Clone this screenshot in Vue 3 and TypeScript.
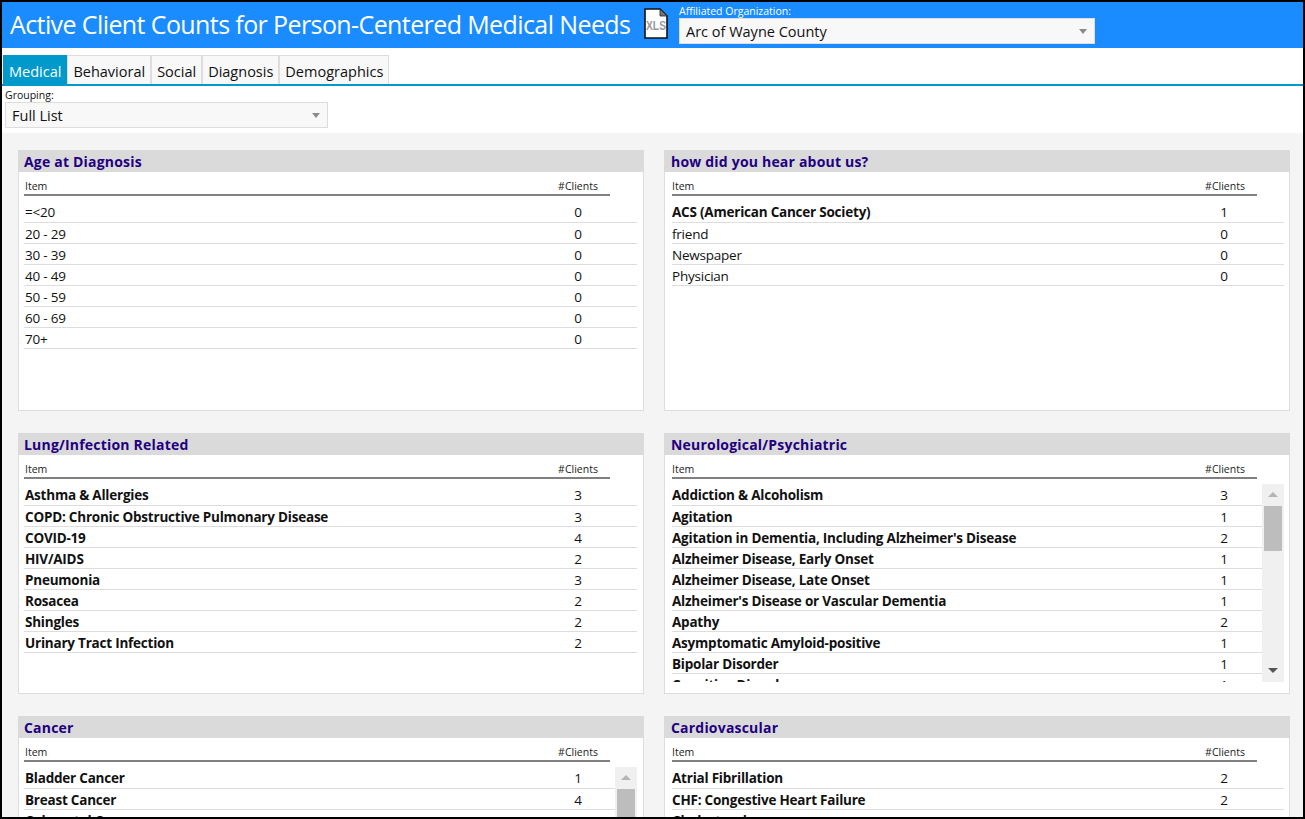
<script setup lang="ts">
interface Row { name: string; count: number }
interface Card { title: string; rows: Row[]; thumb?: number }

const tabs = ['Medical', 'Behavioral', 'Social', 'Diagnosis', 'Demographics']

const toRows = (list: [string, number][]): Row[] => list.map(([name, count]) => ({ name, count }))

const cards: Card[] = [
  { title: 'Age at Diagnosis', rows: toRows([['=<20', 0], ['20 - 29', 0], ['30 - 39', 0], ['40 - 49', 0], ['50 - 59', 0], ['60 - 69', 0], ['70+', 0]]) },
  { title: 'how did you hear about us?', rows: toRows([['ACS (American Cancer Society)', 1], ['friend', 0], ['Newspaper', 0], ['Physician', 0]]) },
  { title: 'Lung/Infection Related', rows: toRows([['Asthma & Allergies', 3], ['COPD: Chronic Obstructive Pulmonary Disease', 3], ['COVID-19', 4], ['HIV/AIDS', 2], ['Pneumonia', 3], ['Rosacea', 2], ['Shingles', 2], ['Urinary Tract Infection', 2]]) },
  { title: 'Neurological/Psychiatric', thumb: 45, rows: toRows([['Addiction & Alcoholism', 3], ['Agitation', 1], ["Agitation in Dementia, Including Alzheimer's Disease", 2], ['Alzheimer Disease, Early Onset', 1], ['Alzheimer Disease, Late Onset', 1], ["Alzheimer's Disease or Vascular Dementia", 1], ['Apathy', 2], ['Asymptomatic Amyloid-positive', 1], ['Bipolar Disorder', 1], ['Cognitive Disorder', 1]]) },
  { title: 'Cancer', thumb: 90, rows: toRows([['Bladder Cancer', 1], ['Breast Cancer', 4], ['Colorectal Cancer', 1]]) },
  { title: 'Cardiovascular', rows: toRows([['Atrial Fibrillation', 2], ['CHF: Congestive Heart Failure', 2], ['Cholesterol', 2]]) }
]
</script>

<template>
  <div class="app">
    <header class="top">
      <h1 class="title">Active Client Counts for Person-Centered Medical Needs</h1>
      <svg class="xls" width="24" height="31" viewBox="0 0 24 31" aria-label="Export to XLS">
        <path d="M1 1H16L23 8V30H1Z" fill="#fff" stroke="#111" stroke-width="1.6" />
        <path d="M16 1V8H23Z" fill="#777" stroke="#222" stroke-width="0.8" />
        <text x="2" y="22" textLength="20" lengthAdjust="spacingAndGlyphs" class="xls-text">XLS</text>
      </svg>
      <div class="org">
        <label class="org-label">Affiliated Organization:</label>
        <div class="select org-select">
          <span>Arc of Wayne County</span>
          <i class="caret"></i>
        </div>
      </div>
    </header>

    <nav class="tabs">
      <div v-for="(t, i) in tabs" :key="t" class="tab" :class="{ active: i === 0 }">{{ t }}</div>
    </nav>

    <div class="filter">
      <label class="filter-label">Grouping:</label>
      <div class="select group-select">
        <span>Full List</span>
        <i class="caret"></i>
      </div>
    </div>

    <main class="content">
      <section v-for="c in cards" :key="c.title" class="card">
        <h2 class="card-title">{{ c.title }}</h2>
        <div class="head">
          <span class="head-item">Item</span>
          <span class="head-count">#Clients</span>
        </div>
        <div class="body">
          <div class="rows">
            <div v-for="r in c.rows" :key="r.name" class="row" :class="{ strong: r.count > 0 }">
              <span class="row-name">{{ r.name }}</span>
              <span class="row-count">{{ r.count }}</span>
            </div>
          </div>
          <div v-if="c.thumb" class="scrollbar">
            <i class="arrow up"></i>
            <div class="track"><div class="thumb" :style="{ height: c.thumb + 'px' }"></div></div>
            <i class="arrow down"></i>
          </div>
        </div>
      </section>
    </main>
  </div>
</template>

<style>
html, body { margin: 0; overflow: hidden; background: #000; }
</style>

<style scoped>
.app {
  box-sizing: border-box;
  width: 1305px;
  height: 819px;
  border: 2px solid #000;
  background: #fff;
  overflow: hidden;
  display: flex;
  flex-direction: column;
  font-family: "Open Sans", "Noto Sans", sans-serif;
  color: #111;
}
.top {
  flex: none;
  height: 46px;
  background: #1a8cff;
  display: flex;
  align-items: flex-start;
  padding-left: 8px;
}
.title {
  margin: 6px 0 0;
  font-size: 25px;
  line-height: 33px;
  font-weight: 400;
  color: #fff;
  white-space: nowrap;
  letter-spacing: -0.6px;
  width: 634px;
}
.xls { margin-top: 6px; flex: none; }
.xls-text { font: 700 13px "Liberation Sans", sans-serif; fill: #999; }
.org { margin-left: 11px; width: 416px; }
.org-label {
  display: block;
  font-size: 10.5px;
  line-height: 14px;
  margin-top: 2px;
  color: #fff;
}
.select {
  box-sizing: border-box;
  height: 26px;
  background: #f8f8f8;
  border: 1px solid #ddd;
  display: flex;
  align-items: center;
  justify-content: space-between;
  padding: 0 6px;
  font-size: 14.5px;
  color: #111;
}
.caret {
  width: 0;
  height: 0;
  border-left: 4px solid transparent;
  border-right: 4px solid transparent;
  border-top: 5px solid #8a8a8a;
  margin-right: 1px;
}
.tabs {
  flex: none;
  display: flex;
  height: 29px;
  margin-top: 7px;
  padding-left: 1px;
  box-sizing: content-box;
  border-bottom: 2px solid #0099cc;
}
.tab {
  box-sizing: border-box;
  height: 29px;
  padding: 0 5px;
  border: 1px solid #ddd;
  border-bottom: 0;
  background: #f8f8f8;
  font-size: 14.5px;
  line-height: 32px;
  color: #111;
}
.tab.active { background: #0099cc; border-color: #0099cc; color: #fff; }
.filter {
  flex: none;
  height: 47px;
  padding-left: 3px;
}
.filter-label {
  display: block;
  font-size: 10.5px;
  line-height: 14px;
  margin-top: 2px;
}
.group-select { width: 323px; }
.content {
  flex: 1;
  min-height: 0;
  background: #f4f4f4;
  display: grid;
  grid-template-columns: 626px 626px;
  grid-auto-rows: 261px;
  column-gap: 20px;
  row-gap: 22px;
  padding: 17px 0 0 16px;
  overflow: hidden;
}
.card {
  box-sizing: border-box;
  background: #fff;
  border: 1px solid #ddd;
  border-top: 0;
  display: flex;
  flex-direction: column;
  min-height: 0;
}
.card-title {
  flex: none;
  margin: 0 -1px;
  height: 22px;
  padding-left: 6px;
  background: #dadada;
  color: #1f0080;
  font-size: 14px;
  line-height: 23px;
  font-weight: 700;
  letter-spacing: 0.2px;
}
.card:nth-child(even) .card-title { padding-left: 7px; }
.head {
  flex: none;
  box-sizing: border-box;
  margin-left: 5px;
  width: 586px;
  height: 24px;
  border-bottom: 2px solid #808080;
  display: flex;
  justify-content: space-between;
  font-size: 10.5px;
  line-height: 28px;
  color: #222;
}
.card:nth-child(even) .head { margin-left: 7px; width: 585px; }
.head-item { padding-left: 1px; }
.card:nth-child(even) .head-item { padding-left: 0; }
.head-count { width: 64px; text-align: center; }
.body {
  flex: none;
  height: 198px;
  margin: 5px 6px 0 5px;
  display: flex;
  overflow: hidden;
}
.card:nth-child(even) .body { margin: 5px 5px 0 7px; }
.rows { flex: 1; min-width: 0; overflow: hidden; }
.row {
  position: relative;
  box-sizing: border-box;
  height: 21px;
  border-bottom: 1px solid #ddd;
  font-size: 13.5px;
  line-height: 22px;
  letter-spacing: -0.22px;
  padding: 0 0 0 1px;
}
.card:nth-child(even) .row { padding-left: 0; }
.row:first-child { height: 22px; line-height: 23px; }
.row.strong { font-weight: 700; }
.row-name { white-space: nowrap; }
.row-count {
  position: absolute;
  top: 0;
  left: 534px;
  width: 40px;
  text-align: center;
  font-weight: 400;
}
.card:nth-child(even) .row-count { left: 532px; }
.scrollbar {
  flex: none;
  width: 22px;
  background: #f0f0f0;
  display: flex;
  flex-direction: column;
  align-items: center;
}
.track { flex: 1; width: 18px; }
.thumb { background: #bdbdbd; }
.arrow { flex: none; width: 0; height: 0; border-left: 5px solid transparent; border-right: 5px solid transparent; }
.arrow.up { border-bottom: 5px solid #b4b4b4; margin: 8px 0 9px; }
.arrow.down { border-top: 5px solid #555; margin: 9px 0 9px; }
</style>
